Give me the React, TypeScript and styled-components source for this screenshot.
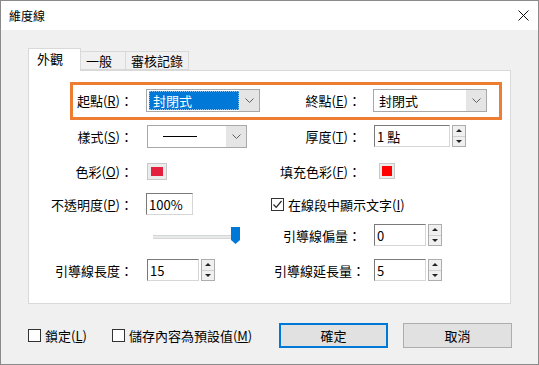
import React from 'react';
import styled, { createGlobalStyle } from 'styled-components';

const GlobalStyle = createGlobalStyle`
    html, body {
        margin: 0;
        padding: 0;
        background: #f0f0f0;
    }
    body {
        font-family: "Noto Sans CJK TC", "Noto Sans", sans-serif;
        font-size: 13px;
        color: #000;
    }
`;

const Window = styled.div`
    width: 537px;
    height: 363px;
    border: 1px solid #8a8a8a;
    background: #f0f0f0;
    display: flex;
    flex-direction: column;
    overflow: hidden;
`;

const TitleBar = styled.div`
    height: 29px;
    flex: 0 0 29px;
    background: #fff;
    display: flex;
    align-items: center;
    justify-content: space-between;
    padding: 0 9px 0 8px;

    span {
        font-size: 12px;
    }
`;

const Body = styled.div`
    padding: 18px 27px 0 27px;
`;

const TabRow = styled.div`
    display: flex;
    align-items: flex-end;
    height: 22px;
`;

const Tab = styled.div<{ $active?: boolean; $w: number }>`
    box-sizing: border-box;
    width: ${p => p.$w}px;
    height: ${p => (p.$active ? 23 : 19)}px;
    margin-bottom: ${p => (p.$active ? -1 : 0)}px;
    margin-left: ${p => (p.$active ? 0 : -1)}px;
    padding: ${p => (p.$active ? '2px 0 0 8px' : '1px 0 0 5px')};
    background: ${p => (p.$active ? '#fff' : '#f0f0f0')};
    border: 1px solid #d9d9d9;
    border-bottom: ${p => (p.$active ? 'none' : '1px solid #d9d9d9')};
    position: relative;
    z-index: ${p => (p.$active ? 2 : 1)};
    line-height: 16px;
`;

const Panel = styled.div`
    position: relative;
    box-sizing: border-box;
    height: 234px;
    background: #fff;
    border: 1px solid #d9d9d9;
`;

const Highlight = styled.div`
    position: absolute;
    left: 41px;
    top: 11px;
    width: 432px;
    height: 38px;
    box-sizing: border-box;
    border: 3px solid #ed7d31;
    pointer-events: none;
`;

const Form = styled.div`
    display: grid;
    grid-template-columns: 117px 128px 100px 1fr;
    grid-template-rows: 36px 36px 34px 32px 30px 40px;
    align-items: center;
    padding-top: 11px;
`;

const Label = styled.div<{ $right?: boolean }>`
    text-align: right;
    padding-right: ${p => (p.$right ? 13 : 13)}px;
    white-space: nowrap;
`;

const Cell = styled.div<{ $span?: boolean; $shift?: number }>`
    display: flex;
    align-items: center;
    grid-column: ${p => (p.$span ? '3 / 5' : 'auto')};
    margin-left: ${p => p.$shift ?? 0}px;
`;

const Combo = styled.div<{ $w: number }>`
    box-sizing: border-box;
    width: ${p => p.$w}px;
    height: 23px;
    border: 1px solid #a8a8a8;
    background: #fff;
    display: flex;
    align-items: stretch;
`;

const ComboField = styled.div<{ $selected?: boolean }>`
    flex: 1;
    display: flex;
    align-items: center;
    margin: ${p => (p.$selected ? '1px 0 1px 2px' : '0')};
    padding-left: ${p => (p.$selected ? 3 : 5)}px;
    background: ${p => (p.$selected ? '#0078d7' : 'transparent')};
    color: ${p => (p.$selected ? '#fff' : '#000')};
    border: ${p => (p.$selected ? '1px dotted rgba(255,255,255,0.55)' : 'none')};
`;

const ComboButton = styled.div`
    width: 20px;
    background: #e5e5e5;
    display: flex;
    align-items: center;
    justify-content: center;
`;

const LineSample = styled.div`
    width: 34px;
    height: 1px;
    background: #000;
    margin-left: 10px;
`;

const TextBox = styled.div<{ $w: number }>`
    box-sizing: border-box;
    width: ${p => p.$w}px;
    height: 22px;
    border: 1px solid;
    border-color: #7a7a7a #d6d6d6 #d6d6d6 #7a7a7a;
    background: #fff;
    padding-left: 2px;
    display: flex;
    align-items: center;
`;

const Spin = styled.div`
    box-sizing: border-box;
    width: 14px;
    height: 22px;
    margin-left: 2px;
    border: 1px solid #adadad;
    display: flex;
    flex-direction: column;
`;

const SpinHalf = styled.div<{ $down?: boolean }>`
    flex: 1;
    background: #f0f0f0;
    display: flex;
    align-items: center;
    justify-content: center;
    border-top: ${p => (p.$down ? '1px solid #d0d0d0' : 'none')};

    &::after {
        content: '';
        border-left: 3px solid transparent;
        border-right: 3px solid transparent;
        ${p => (p.$down ? 'border-top: 3px solid #222;' : 'border-bottom: 3px solid #222;')}
    }
`;

const Swatch = styled.div<{ $w: number; $h: number; $color: string; $pad: number }>`
    box-sizing: border-box;
    width: ${p => p.$w}px;
    height: ${p => p.$h}px;
    border: 1px solid #c8c8c8;
    background: #ececec;
    padding: ${p => p.$pad}px;

    &::after {
        content: '';
        display: block;
        width: 100%;
        height: 100%;
        background: ${p => p.$color};
    }
`;

const CheckBox = styled.span`
    box-sizing: border-box;
    width: 13px;
    height: 13px;
    border: 1px solid #333;
    background: #fff;
    display: inline-flex;
    align-items: center;
    justify-content: center;
    margin-right: 4px;
    flex: 0 0 13px;
`;

const CheckItem = styled.label<{ $gap?: number }>`
    display: flex;
    align-items: center;
    margin-left: ${p => p.$gap ?? 0}px;
    white-space: nowrap;
`;

const Slider = styled.div`
    position: relative;
    width: 87px;
    height: 18px;
    margin-left: 7px;
`;

const Track = styled.div`
    position: absolute;
    left: 0;
    right: 4px;
    top: 9px;
    height: 2px;
    background: #e7eaea;
    border: 1px solid #d6d6d6;
    border-width: 1px 0;
`;

const Thumb = styled.svg`
    position: absolute;
    right: 0;
    top: 1px;
`;

const Footer = styled.div`
    display: flex;
    align-items: center;
    margin-top: 19px;
    padding: 0 26px 0 27px;
    height: 25px;
`;

const Buttons = styled.div`
    display: flex;
    gap: 15px;
    margin-left: auto;
`;

const Button = styled.button<{ $primary?: boolean }>`
    box-sizing: border-box;
    width: 109px;
    height: 25px;
    background: #e1e1e1;
    border: ${p => (p.$primary ? '2px solid #0078d7' : '1px solid #adadad')};
    font-family: inherit;
    font-size: 13px;
    color: #000;
    padding: 0;
`;

const Chevron = () => (
    <svg width="9" height="5" viewBox="0 0 9 5">
        <path d="M0.5 0.5 L4.5 4.5 L8.5 0.5" fill="none" stroke="#606060" strokeWidth="1" />
    </svg>
);

const Tick = () => (
    <svg width="11" height="11" viewBox="0 0 11 11">
        <path d="M1.5 5.5 L4.2 8.3 L9.5 2" fill="none" stroke="#222" strokeWidth="1.2" />
    </svg>
);

const SpinBox = ({ value, w }: { value: string; w: number }) => (
    <>
        <TextBox $w={w}>{value}</TextBox>
        <Spin>
            <SpinHalf />
            <SpinHalf $down />
        </Spin>
    </>
);

export default function App() {
    return (
        <>
            <GlobalStyle />
            <Window>
                <TitleBar>
                    <span>維度線</span>
                    <svg width="11" height="11" viewBox="0 0 11 11">
                        <path d="M0.5 0.5 L10.5 10.5 M10.5 0.5 L0.5 10.5" stroke="#111" strokeWidth="1" />
                    </svg>
                </TitleBar>
                <Body>
                    <TabRow>
                        <Tab $active $w={53}>外觀</Tab>
                        <Tab $w={46}>一般</Tab>
                        <Tab $w={64}>審核記錄</Tab>
                    </TabRow>
                    <Panel>
                        <Form>
                            <Label>起點(<u>R</u>)：</Label>
                            <Cell>
                                <Combo $w={114}>
                                    <ComboField $selected>封閉式</ComboField>
                                    <ComboButton><Chevron /></ComboButton>
                                </Combo>
                            </Cell>
                            <Label $right>終點(<u>E</u>)：</Label>
                            <Cell $shift={-1}>
                                <Combo $w={114}>
                                    <ComboField>封閉式</ComboField>
                                    <ComboButton><Chevron /></ComboButton>
                                </Combo>
                            </Cell>

                            <Label>樣式(<u>S</u>)：</Label>
                            <Cell $shift={1}>
                                <Combo $w={100}>
                                    <ComboField><LineSample /></ComboField>
                                    <ComboButton><Chevron /></ComboButton>
                                </Combo>
                            </Cell>
                            <Label $right>厚度(<u>T</u>)：</Label>
                            <Cell>
                                <SpinBox value="1 點" w={76} />
                            </Cell>

                            <Label>色彩(<u>O</u>)：</Label>
                            <Cell $shift={1}>
                                <Swatch $w={20} $h={17} $pad={3} $color="#e3203d" />
                            </Cell>
                            <Label $right>填充色彩(<u>F</u>)：</Label>
                            <Cell $shift={5}>
                                <Swatch $w={16} $h={16} $pad={2} $color="#ff0000" />
                            </Cell>

                            <Label>不透明度(<u>P</u>)：</Label>
                            <Cell>
                                <TextBox $w={47}>100%</TextBox>
                            </Cell>
                            <Cell $span $shift={-3}>
                                <CheckItem>
                                    <CheckBox><Tick /></CheckBox>
                                    在線段中顯示文字(<u>I</u>)
                                </CheckItem>
                            </Cell>

                            <div />
                            <Cell>
                                <Slider>
                                    <Track />
                                    <Thumb width="9" height="17" viewBox="0 0 9 17">
                                        <path d="M0 0 H9 V13 L4.5 17 L0 13 Z" fill="#0078d7" />
                                    </Thumb>
                                </Slider>
                            </Cell>
                            <Label $right>引導線偏量：</Label>
                            <Cell>
                                <SpinBox value="0" w={52} />
                            </Cell>

                            <Label>引導線長度：</Label>
                            <Cell $shift={1}>
                                <SpinBox value="15" w={52} />
                            </Cell>
                            <Label $right>引導線延長量：</Label>
                            <Cell>
                                <SpinBox value="5" w={52} />
                            </Cell>
                        </Form>
                        <Highlight />
                    </Panel>
                </Body>
                <Footer>
                    <CheckItem>
                        <CheckBox />
                        鎖定(<u>L</u>)
                    </CheckItem>
                    <CheckItem $gap={25}>
                        <CheckBox />
                        儲存內容為預設值(<u>M</u>)
                    </CheckItem>
                    <Buttons>
                        <Button $primary>確定</Button>
                        <Button>取消</Button>
                    </Buttons>
                </Footer>
            </Window>
        </>
    );
}
